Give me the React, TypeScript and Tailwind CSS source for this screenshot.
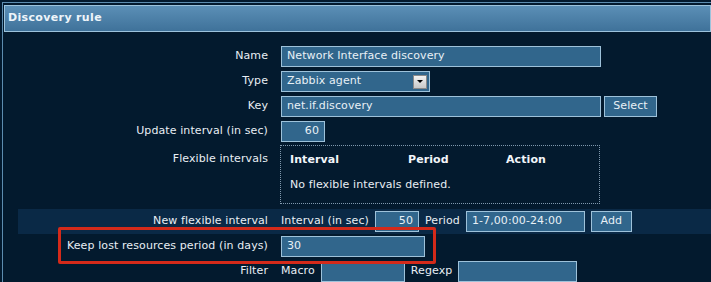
import React from 'react';

const font = { fontFamily: '"DejaVu Sans", Verdana, sans-serif' };

const inputCls =
  'h-[21px] bg-[#31668c] border border-[#9ec2da] text-[#e8f0f6] text-[11px] px-[5px] flex items-center';

const Field: React.FC<{ w: string; value?: string; right?: boolean }> = ({ w, value = '', right }) => (
  <div className={`${inputCls} ${w} ${right ? 'justify-end' : ''}`}>{value}</div>
);

const Row: React.FC<{ label: string; children?: React.ReactNode; className?: string; top?: boolean }> = ({
  label,
  children,
  className = '',
  top,
}) => (
  <div className={`flex ${top ? 'items-start' : 'items-center'} ${className}`}>
    <div className={`w-[263px] shrink-0 pr-[13px] text-right text-[11px] text-[#e8eef4] ${top ? 'pt-[6px]' : ''}`}>
      {label}
    </div>
    <div className="flex items-center gap-[6px]">{children}</div>
  </div>
);

export default function App() {
  return (
    <div className="w-[711px] h-[282px] overflow-hidden bg-[#031a2e] tracking-[0.1px]" style={font}>
      <div className="pt-[2px] pl-[2px]">
        <div className="border-l border-t border-[#5d8db0] pt-[2px] pl-[1px] h-[290px]">
          {/* Header */}
          <div className="h-[27px] border border-[#9cc3dc] bg-gradient-to-b from-[#5b8fb6] to-[#3f729a] flex items-center pl-[3px]">
            <span className="text-[11px] font-bold text-[#eef5fa] tracking-[0.35px]">Discovery rule</span>
          </div>

          {/* Form */}
          <div className="pl-[14px] pt-[12px]">
            <Row label="Name" className="h-[25px]">
              <Field w="w-[320px]" value="Network Interface discovery" />
            </Row>
            <Row label="Type" className="h-[25px]">
              <div className={`${inputCls} w-[149px] justify-between pr-[2px]`}>
                <span>Zabbix agent</span>
                <span className="w-[14px] h-[14px] bg-gradient-to-b from-[#f2f2f2] to-[#c8c8c8] border border-[#8a8a8a] flex items-center justify-center">
                  <svg width="6" height="4" viewBox="0 0 6 4">
                    <path d="M0 0 H6 L3 3 Z" fill="#000" />
                  </svg>
                </span>
              </div>
            </Row>
            <Row label="Key" className="h-[25px]">
              <div className="flex items-center gap-[3px]">
                <Field w="w-[320px]" value="net.if.discovery" />
                <div className={`${inputCls} w-[53px] justify-center`}>Select</div>
              </div>
            </Row>
            <Row label="Update interval (in sec)" className="h-[25px]">
              <Field w="w-[44px]" value="60" right />
            </Row>
            <Row label="Flexible intervals" className="h-[65px] pt-[1px]" top>
              <div className="w-[320px] h-[59px] border border-dotted border-[#7f98ad] px-[9px] pt-[6px] -ml-[1px]">
                <div className="flex text-[11px] font-bold text-[#f2f6fa]">
                  <span className="w-[118px]">Interval</span>
                  <span className="w-[98px]">Period</span>
                  <span>Action</span>
                </div>
                <div className="text-[11px] text-[#e8eef4] mt-[8px]">No flexible intervals defined.</div>
              </div>
            </Row>
            <div className="bg-[#0a2946] h-[25px] flex items-center">
              <Row label="New flexible interval">
                <span className="text-[11px] text-[#e8eef4]">Interval (in sec)</span>
                <Field w="w-[44px]" value="50" right />
                <span className="text-[11px] text-[#e8eef4]">Period</span>
                <Field w="w-[119px]" value="1-7,00:00-24:00" />
                <div className={`${inputCls} w-[41px] justify-center`}>Add</div>
              </Row>
            </div>
            <div className="relative">
              <Row label="Keep lost resources period (in days)" className="h-[25px]">
                <Field w="w-[144px]" value="30" />
              </Row>
              <div className="absolute left-[40px] top-[-7px] w-[378px] h-[37px] border-[3px] border-[#d42a1a] rounded-[2px] pointer-events-none" />
            </div>
            <Row label="Filter" className="h-[25px]">
              <span className="text-[11px] text-[#e8eef4]">Macro</span>
              <Field w="w-[84px]" />
              <span className="text-[11px] text-[#e8eef4]">Regexp</span>
              <Field w="w-[119px]" />
            </Row>
          </div>
        </div>
      </div>
    </div>
  );
}
